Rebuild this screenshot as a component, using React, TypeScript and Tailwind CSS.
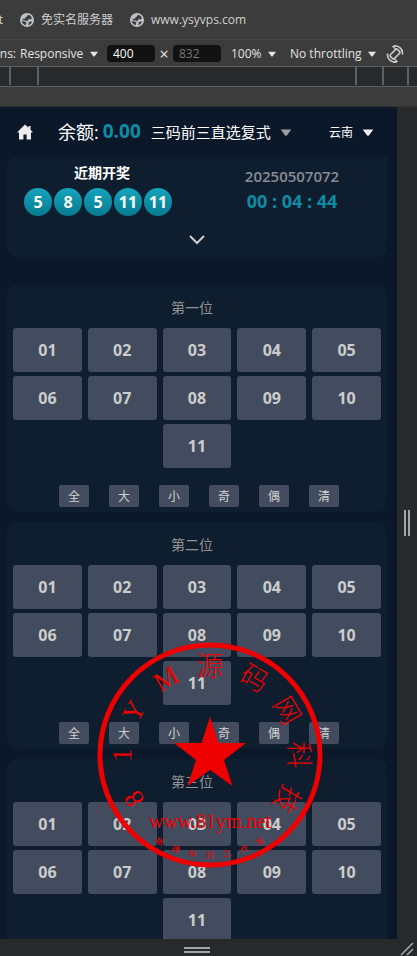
import { useState } from "react";
import type { ReactNode } from "react";

const UI = "font-['Open_Sans','Noto_Sans_CJK_SC',sans-serif]";
const NUMBERS = ["01", "02", "03", "04", "05", "06", "07", "08", "09", "10", "11"];
const FILTERS = ["全", "大", "小", "奇", "偶", "清"];
const DRAW = ["5", "8", "5", "11", "11"];

function GlobeIcon() {
  return (
    <svg viewBox="0 0 14 14" className="mx-px size-3.5 shrink-0" aria-hidden="true">
      <circle cx="7" cy="7" r="7" fill="#bdc1c6" />
      <path
        d="M7.6 2.2C9 1.8 10.6 2.6 11.3 3.8L11.8 5.4L10.4 6.6L9.3 6L8 6.8L7.4 8.4L5.6 7.6L3.6 7.4L2.2 6.2C3 5.6 4.4 6 5.2 5.6L5.4 4.2L7 3.6ZM1.8 8L4.6 8.4L6.4 9.4L6 11L5.2 12.2C3.4 11.4 2 10 1.8 8ZM8.4 9.4L10.4 8.6L12 8.8C11.4 10.6 10 12 8.2 12.3L8.8 10.8Z"
        fill="#3c3c3c"
      />
    </svg>
  );
}

function HomeIcon() {
  return (
    <svg viewBox="0 0 16 16" className="size-4" aria-hidden="true">
      <path d="M8 0.5L11.5 3.8V2H13.5V5.8L16 8.5H14V15.5H9.6V10.5H6.4V15.5H2V8.5H0Z" fill="#eeeeee" />
    </svg>
  );
}

function RotateIcon() {
  return (
    <svg viewBox="0 0 18 18" className="size-[18px]" fill="none" stroke="#c7c7c7" strokeWidth="1.7" aria-hidden="true">
      <rect x="6.2" y="4" width="5.6" height="10" rx="1.5" transform="rotate(45 9 9)" />
      <path d="M7.5 1.5C11.5 -0.2 17.5 3.5 16.3 9.5M10.5 16.5C6.5 18.2 0.5 14.5 1.7 8.5" />
      <path d="M10.5 0.2L7 1.6L9.6 4.2M7.5 17.8L11 16.4L8.4 13.8" strokeWidth="1.3" />
    </svg>
  );
}

function Caret({ className }: { className: string }) {
  return (
    <svg viewBox="0 0 12 8" className={`shrink-0 ${className}`} aria-hidden="true">
      <path d="M0 0.5h12L7 7.3Q6 8.2 5 7.3Z" fill="currentColor" />
    </svg>
  );
}

function Picker({ label, value, className, caret }: { label: string; value: string; className: string; caret: string }) {
  return (
    <label className={`flex shrink-0 items-center ${className}`}>
      <span className="sr-only">{label}</span>
      <select className="appearance-none bg-transparent outline-none" defaultValue={value}>
        <option value={value}>{value}</option>
      </select>
      <Caret className={caret} />
    </label>
  );
}

function Bookmark({ children }: { children: ReactNode }) {
  return (
    <a href="#" className="flex shrink-0 items-center gap-1.5">
      <GlobeIcon />
      {children}
    </a>
  );
}

function BrowserBars() {
  return (
    <header className="shrink-0 overflow-hidden bg-[#3c3c3c] text-xs text-[#d0d0d0]">
      <nav className="flex h-[39px] items-center gap-4 whitespace-nowrap">
        <a href="#" className="flex w-[3px] shrink-0 justify-end overflow-hidden">
          net
        </a>
        <Bookmark>免实名服务器</Bookmark>
        <Bookmark>www.ysyvps.com</Bookmark>
      </nav>
      <div className="flex h-[27px] items-center border-t border-[#484848] pt-px font-medium whitespace-nowrap text-[#e3e3e3]">
        <div className="flex w-[98px] shrink-0 justify-end overflow-hidden">
          <label className="flex items-center gap-1">
            <span>Dimensions:</span>
            <select className="appearance-none bg-transparent outline-none" defaultValue="Responsive">
              <option>Responsive</option>
            </select>
            <Caret className="ml-0.5 h-1.5 w-2" />
          </label>
        </div>
        <input
          aria-label="Width"
          defaultValue="400"
          className="ml-[9px] h-[17px] w-12 shrink-0 rounded bg-[#121212] px-1.5 text-white outline-none"
        />
        <span className="w-[18px] shrink-0 text-center text-base leading-4 font-normal">×</span>
        <input
          aria-label="Height"
          defaultValue="832"
          className="h-[17px] w-12 shrink-0 rounded bg-[#121212] px-1.5 font-normal text-[#777777] outline-none"
        />
        <Picker label="Zoom" value="100%" className="ml-2.5 gap-1.5" caret="h-1.5 w-2" />
        <Picker label="Throttling" value="No throttling" className="ml-3.5 gap-1.5" caret="h-1.5 w-2" />
        <button aria-label="Rotate" className="ml-2.5 shrink-0">
          <RotateIcon />
        </button>
      </div>
      <div className="flex h-[21px] border-y border-[#606060] bg-[#28292a] pb-px">
        <i className="w-[11px] border-r-2 border-[#606060]" />
        <i className="w-7 border-r-2 border-[#606060]" />
        <i className="flex-1" />
        <i className="w-[27px] border-l-2 border-[#606060]" />
        <i className="w-[25px] border-l-2 border-[#606060]" />
        <i className="w-[10px] border-l-2 border-[#606060]" />
      </div>
      <div className="h-5 border-b border-[#303030]" />
    </header>
  );
}

function TopBar() {
  return (
    <div className="flex h-[50px] items-center pl-[17px] text-white">
      <a href="#" aria-label="首页">
        <HomeIcon />
      </a>
      <p className="ml-[25px] flex items-center gap-1 text-lg whitespace-nowrap">
        余额: <b className="text-[19px] font-bold text-[#0f8ba3]">0.00</b>
      </p>
      <Picker label="玩法" value="三码前三直选复式" className="ml-2.5 gap-2 text-[15px]" caret="h-[7px] w-3 text-[#a0a0a0]" />
      <Picker label="地区" value="云南" className="mr-[23px] ml-auto gap-2 pt-px text-xs" caret="h-[7px] w-3 text-[#f0f0f0]" />
    </div>
  );
}

function RecentDraw() {
  return (
    <section className="mr-2.5 ml-[7px] h-[100px] rounded-[10px] rounded-tr-none bg-[#0f1e2f]">
      <div className="flex h-[74px]">
        <div className="w-1/2 pt-1.5">
          <h2 className="text-center text-sm leading-5 font-bold text-white">近期开奖</h2>
          <ul className="mt-[5px] flex justify-start gap-0.5 pl-[17px]">
            {DRAW.map((n, i) => (
              <li
                key={i}
                className="flex size-7 items-center justify-center rounded-full bg-linear-to-b from-[#16a5be] to-[#067a8f] text-base font-bold text-white"
              >
                {n}
              </li>
            ))}
          </ul>
        </div>
        <div className="w-1/2 pt-[9px] text-center">
          <p className="text-[15px] leading-5 font-semibold text-[#888c93]">20250507072</p>
          <p className="mt-[5px] text-lg leading-5 font-bold text-[#0f8ba3]">00 : 04 : 44</p>
        </div>
      </div>
      <button aria-label="展开" className="mx-auto block w-4 pt-1">
        <svg viewBox="0 0 16 10" className="h-2.5 w-4" fill="none" stroke="#cccccc" strokeWidth="2">
          <path d="M1 1l7 7 7-7" />
        </svg>
      </button>
    </section>
  );
}

function Position({ title }: { title: string }) {
  const [picked, setPicked] = useState<string[]>([]);
  const toggle = (n: string) => setPicked((p) => (p.includes(n) ? p.filter((x) => x !== n) : [...p, n]));
  return (
    <section className="mr-2.5 ml-[7px] rounded-[10px] bg-[#0f1e2f] px-1.5 pt-[13px] pb-[5px]">
      <h3 className="pr-2.5 text-center text-sm leading-5 text-[#929292]">{title}</h3>
      <div className="mt-2.5 grid grid-cols-5 gap-x-1.5 gap-y-1">
        {NUMBERS.map((n) => (
          <button
            key={n}
            onClick={() => toggle(n)}
            className={`h-11 rounded-[3px] text-base font-bold text-[#cccccc] last:col-start-3 ${
              picked.includes(n) ? "bg-[#0f8ba3]" : "bg-[#424c5e]"
            }`}
          >
            {n}
          </button>
        ))}
      </div>
      <div className="mt-[17px] flex justify-center gap-5 pl-1">
        {FILTERS.map((f) => (
          <button key={f} className="h-[22px] w-[30px] rounded-xs bg-[#424c5e] pt-px text-xs text-[#d0d0d0]">
            {f}
          </button>
        ))}
      </div>
    </section>
  );
}

function Seal() {
  const ring = ["8", "1", "Y", "M", "源", "码", "网", "科", "技"];
  const studio = ["敏", "捷", "科", "技", "工", "作", "室"];
  return (
    <svg
      viewBox="-113 -113 226 226"
      className="pointer-events-none absolute top-[642px] left-[97px] size-[226px] font-['Liberation_Serif','Noto_Sans_CJK_SC',serif] font-light"
      fill="#ee0000"
      textAnchor="middle"
    >
      <circle r="110" fill="none" stroke="#ee0000" strokeWidth="5" />
      <path d="M0-38L8.5-12H36L14 5L22.5 31L0 15L-22.5 31L-14 5L-36-12H-8.5Z" />
      {ring.map((c, i) => (
        <text key={i} y="-79" fontSize="27" transform={`rotate(${(i - 4) * 30})`}>
          {c}
        </text>
      ))}
      <text y="73" fontSize="20">
        www.81ym.net
      </text>
      {studio.map((c, i) => (
        <text key={i} y="103" fontSize="8" fontWeight="400" transform={`rotate(${(3 - i) * 10})`}>
          {c}
        </text>
      ))}
    </svg>
  );
}

export default function App() {
  return (
    <div className={`relative flex h-screen flex-col overflow-hidden bg-[#28292a] ${UI}`}>
      <BrowserBars />
      <div className="flex min-h-0 flex-1">
        <main className="min-w-0 flex-1 overflow-hidden bg-[#0b182a]">
          <TopBar />
          <RecentDraw />
          <div className="mt-7 flex flex-col gap-2.5">
            <Position title="第一位" />
            <Position title="第二位" />
            <Position title="第三位" />
          </div>
        </main>
        <div className="flex w-5 shrink-0 items-center justify-center gap-0.5">
          <i className="h-[26px] w-0.5 bg-[#a5a5a5]" />
          <i className="h-[26px] w-0.5 bg-[#a5a5a5]" />
        </div>
      </div>
      <footer className="flex h-[17px] shrink-0 items-center">
        <div className="flex flex-1 flex-col items-center gap-0.5 pt-1 pr-1">
          <i className="h-0.5 w-[26px] bg-[#a5a5a5]" />
          <i className="h-0.5 w-[26px] bg-[#a5a5a5]" />
        </div>
        <svg viewBox="0 0 20 17" className="h-[17px] w-5" stroke="#a5a5a5" strokeWidth="1.6">
          <path d="M4 16L16 4M10 16L16 10" />
        </svg>
      </footer>
      <Seal />
    </div>
  );
}
